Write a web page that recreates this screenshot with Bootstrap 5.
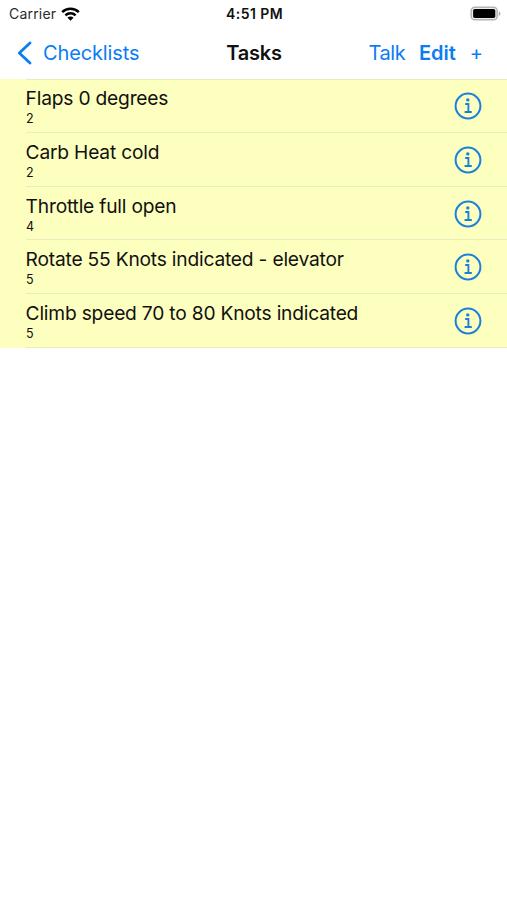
<!DOCTYPE html>
<html lang="en">
<head>
<meta charset="utf-8">
<meta name="viewport" content="width=device-width, initial-scale=1">
<title>Tasks</title>
<link href="https://cdn.jsdelivr.net/npm/bootstrap@5.3.0/dist/css/bootstrap.min.css" rel="stylesheet">
<style>
body{font-family:Inter,"Liberation Sans",sans-serif;color:#111;background:#fff}
.status{height:27px;font-size:14px;line-height:25px;padding:0 6px 0 9px}
.carrier{letter-spacing:.2px;color:#2b2b2b}
.status .time{font-weight:600;letter-spacing:.45px;margin-right:1px}
.side{flex:1 1 0}
.topbar{height:52px;font-size:20px;line-height:51px;padding:0 24px 0 17px}
.topbar a{color:#0a7cf5;text-decoration:none}
.topbar .side{height:50px}
.back-label{margin-left:11px;letter-spacing:-.13px}
.heading{font-size:20px;font-weight:600;letter-spacing:-.2px;margin:0;line-height:51px}
.talk{letter-spacing:-.4px;margin-right:13.5px}
.edit{margin-right:14px}
.tasks{background:#fdffbf;margin:0;--line:#e9ecc0}
.task{height:53.8px;padding-left:26px}
.task-body{height:100%;padding:7px 25px 0 0;border-bottom:1px solid var(--line)}
.task:first-child .task-body{border-top:1px solid var(--line);padding-top:6px}
.task-name{font-size:19.2px;line-height:24px;letter-spacing:-.2px;margin-left:-.4px;white-space:nowrap}
.task-count{font-size:12.5px;line-height:17px}
.info{margin-top:6px}
</style>
<script src="https://cdn.jsdelivr.net/npm/bootstrap@5.3.0/dist/js/bootstrap.bundle.min.js"></script>
</head>
<body>
<svg class="d-none">
<symbol id="info" viewBox="0 0 28 28"><circle cx="14" cy="14" r="12.4" fill="none" stroke="#1a80dc" stroke-width="2"/><circle cx="13.8" cy="7.9" r="1.7" fill="#1a80dc"/><path d="M11.2 12h3.2v7.8M10.6 20h7.2" fill="none" stroke="#1a80dc" stroke-width="1.9"/></symbol>
</svg>
<header>
<div class="status d-flex align-items-center">
<div class="side d-flex align-items-center"><span class="carrier">Carrier</span>
<svg class="ms-1" width="20" height="16" viewBox="-.5 0 20 16"><g fill="none" stroke="#000" stroke-width="2.5"><path d="M1.7 6.1a11.8 11.8 0 0 1 16.6 0M4.9 9.3a7.2 7.2 0 0 1 10.2 0"/></g><path d="M10 14.8l-3-3a4.2 4.2 0 0 1 6 0z"/></svg></div>
<span class="time">4:51 PM</span>
<div class="side d-flex justify-content-end"><svg width="31" height="16" viewBox="0 0 31 16"><rect x="1.2" y="1.2" width="26" height="12.6" rx="3.6" fill="#eee" stroke="#b4b4b4" stroke-width="1.5"/><rect x="3.1" y="3" width="22.2" height="9" rx="1.7"/><path d="M28.8 5.2c2.2 1 2.2 3.8 0 4.8z" fill="#aaa"/></svg></div>
</div>
<nav class="topbar d-flex align-items-center">
<div class="side d-flex"><a href="#" class="d-flex align-items-center"><svg width="15" height="24" viewBox="0 0 15 24"><path d="M13 2L2.3 12 13 22" fill="none" stroke="#0a7cf5" stroke-width="2.8" stroke-linecap="round" stroke-linejoin="round"/></svg><span class="back-label">Checklists</span></a></div>
<h1 class="heading ps-2">Tasks</h1>
<div class="side d-flex justify-content-end align-items-center"><a href="#" class="talk">Talk</a><a href="#" class="edit fw-semibold">Edit</a><a href="#" class="add">+</a></div>
</nav>
</header>
<main>
<ul class="tasks list-unstyled">
<li class="task"><div class="task-body d-flex justify-content-between"><div><div class="task-name">Flaps 0 degrees</div><div class="task-count">2</div></div><svg class="info" width="28" height="28"><use href="#info"/></svg></div></li>
<li class="task"><div class="task-body d-flex justify-content-between"><div><div class="task-name">Carb Heat cold</div><div class="task-count">2</div></div><svg class="info" width="28" height="28"><use href="#info"/></svg></div></li>
<li class="task"><div class="task-body d-flex justify-content-between"><div><div class="task-name">Throttle full open</div><div class="task-count">4</div></div><svg class="info" width="28" height="28"><use href="#info"/></svg></div></li>
<li class="task"><div class="task-body d-flex justify-content-between"><div><div class="task-name">Rotate 55 Knots indicated - elevator</div><div class="task-count">5</div></div><svg class="info" width="28" height="28"><use href="#info"/></svg></div></li>
<li class="task"><div class="task-body d-flex justify-content-between"><div><div class="task-name">Climb speed 70 to 80 Knots indicated</div><div class="task-count">5</div></div><svg class="info" width="28" height="28"><use href="#info"/></svg></div></li>
</ul>
</main>
</body>
</html>
